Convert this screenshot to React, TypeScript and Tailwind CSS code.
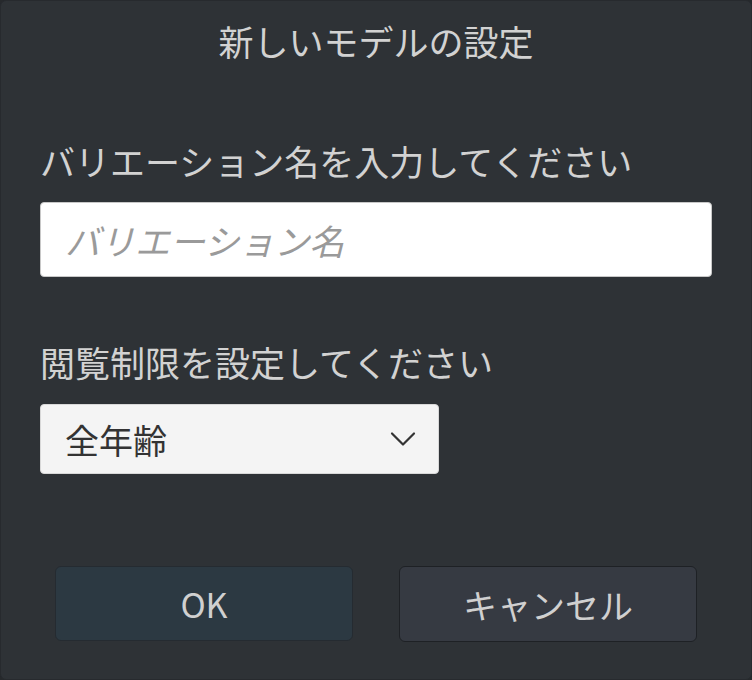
import { ChevronDown } from 'lucide-react'

const jp = { fontFamily: '"Noto Sans CJK JP", "Noto Sans", sans-serif' }

export default function App() {
  return (
    <div className="w-[752px] h-[680px] bg-[#26292c]" style={jp}>
      <div className="h-full rounded-[6px] bg-[#2e3236] border border-[#272a2e] px-[39px]">
        <div className="pt-[18px] text-center text-[35px] leading-[44px] text-[#d2d2d2]">
          新しいモデルの設定
        </div>

        <div className="mt-[76px] text-[35px] leading-[44px] text-[#d2d2d2]">
          バリエーション名を入力してください
        </div>
        <input
          className="mt-[19px] w-[672px] h-[75px] rounded-[4px] bg-white border border-[#c8c8c8] px-[24px] text-[35px] text-[#333] placeholder:text-[#9a9a9a] placeholder:italic outline-none"
          placeholder="バリエーション名"
          style={jp}
        />

        <div className="mt-[63px] text-[35px] leading-[44px] text-[#d2d2d2]">
          閲覧制限を設定してください
        </div>
        <div className="mt-[20px] w-[399px] h-[70px] rounded-[4px] bg-[#f4f4f4] border border-[#d8d8d8] flex items-center justify-between pl-[24px] pr-[13px]">
          <span className="text-[34px] text-[#333]">全年齢</span>
          <ChevronDown size={44} strokeWidth={1.2} className="text-[#333]" />
        </div>

        <div className="mt-[92px] flex gap-[46px] pl-[15px]">
          <button className="w-[298px] h-[75px] rounded-[6px] bg-[#2c3942] border border-[#252b31] text-[34px] text-[#d0d0d0]" style={jp}>
            OK
          </button>
          <button className="w-[298px] h-[76px] rounded-[6px] bg-[#363a42] border border-[#1e2125] text-[34px] text-[#d0d0d0]" style={jp}>
            キャンセル
          </button>
        </div>
      </div>
    </div>
  )
}
